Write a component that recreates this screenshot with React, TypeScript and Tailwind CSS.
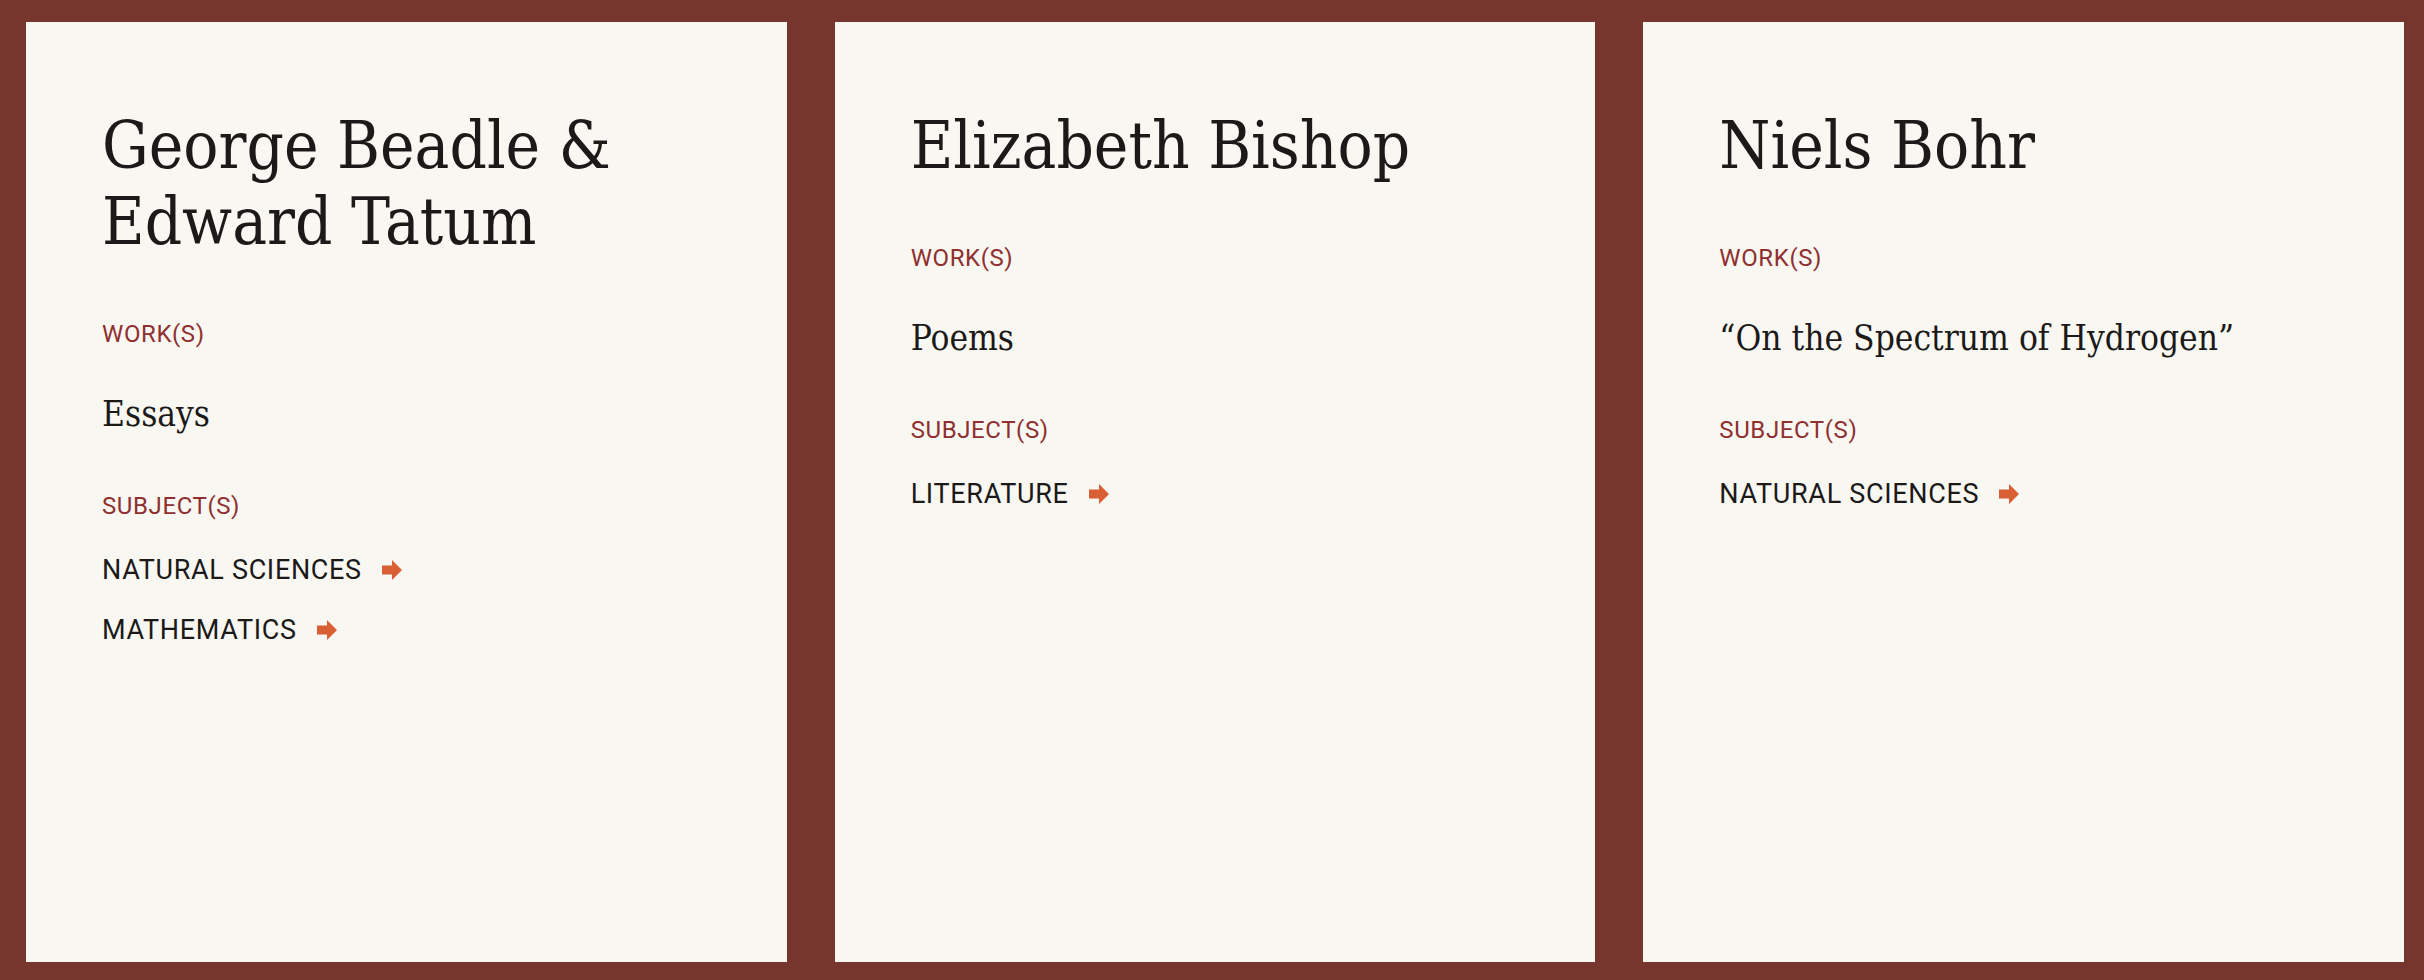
type Person = { name: string; works: string[]; subjects: string[] };

const people: Person[] = [
  { name: "George Beadle & Edward Tatum", works: ["Essays"], subjects: ["Natural Sciences", "Mathematics"] },
  { name: "Elizabeth Bishop", works: ["Poems"], subjects: ["Literature"] },
  { name: "Niels Bohr", works: ["“On the Spectrum of Hydrogen”"], subjects: ["Natural Sciences"] },
];

function Arrow() {
  return (
    <svg className="h-5 w-5 shrink-0 text-[#d95f35]" viewBox="0 0 20 20" fill="currentColor" aria-hidden="true">
      <path d="M0 5.5h10V0l10 10-10 10v-5.5H0z" />
    </svg>
  );
}

function Label({ children }: { children: string }) {
  return (
    <h3 className="font-['Roboto',sans-serif] text-2xl leading-8 tracking-wide text-[#8f2f30] uppercase">{children}</h3>
  );
}

function Card({ person }: { person: Person }) {
  return (
    <article className="bg-[#f9f7f1] px-[76px] py-[86px] text-[#1b1a19]">
      <h2 className="max-w-[560px] font-['DejaVu_Serif_Condensed','DejaVu_Serif',serif] text-[65px] leading-[76px]">
        {person.name}
      </h2>
      <div className="mt-[58px]">
        <Label>Work(s)</Label>
        {person.works.map((work) => (
          <p
            key={work}
            className="mt-10 font-['DejaVu_Serif_Condensed','DejaVu_Serif',serif] text-[35px] leading-[48px]"
          >
            {work}
          </p>
        ))}
      </div>
      <div className="mt-[52px]">
        <Label>Subject(s)</Label>
        <ul className="mt-7 flex flex-col gap-5">
          {person.subjects.map((subject) => (
            <li key={subject} className="flex">
              <a
                href="#"
                className="inline-flex items-center gap-5 font-['Roboto',sans-serif] text-[27px] leading-10 tracking-wide uppercase"
              >
                {subject}
                <Arrow />
              </a>
            </li>
          ))}
        </ul>
      </div>
    </article>
  );
}

export default function App() {
  return (
    <main className="grid min-h-screen grid-cols-3 gap-12 bg-[#76362d] pt-[22px] pr-5 pb-[18px] pl-[26px]">
      {people.map((person) => (
        <Card key={person.name} person={person} />
      ))}
    </main>
  );
}
